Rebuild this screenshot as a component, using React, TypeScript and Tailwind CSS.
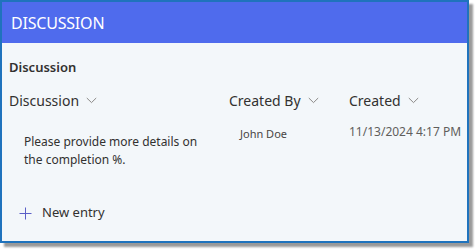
import React from "react";

const Chevron = () => (
  <svg width="11" height="7" viewBox="0 0 11 7" className="ml-[7px] mt-[1px]">
    <path d="M0.8 1 L5.5 5.6 L10.2 1" fill="none" stroke="#8a8886" strokeWidth="1" />
  </svg>
);

export default function App() {
  return (
    <div className="w-[476px] h-[249px] bg-white" style={{ fontFamily: '"Noto Sans", "Open Sans", sans-serif' }}>
      <div className="w-[469px] h-[243px] border-2 border-[#1f73bd] bg-[#f3f7fa] shadow-[4px_4px_2px_rgba(0,0,0,0.4)] flex flex-col">
        <div className="h-[41px] bg-[#4f6bed] flex items-center pl-[9px] text-white text-[16px] tracking-[-0.2px]">
          DISCUSSION
        </div>
        <div className="h-[36px] flex items-end pl-[7px] pb-[2px] text-[13px] font-semibold text-[#323130]">
          Discussion
        </div>
        <div className="h-[42px] flex items-center text-[14px] text-[#323130]">
          <div className="w-[220px] pl-[7px] flex items-center">Discussion<Chevron /></div>
          <div className="w-[120px] pl-[7px] flex items-center">Created By<Chevron /></div>
          <div className="pl-[7px] flex items-center">Created<Chevron /></div>
        </div>
        <div className="h-[71px] flex text-[12px] text-[#323130]">
          <div className="w-[220px] pl-[22px] pr-[14px] pt-[12px] leading-[18px]">
            Please provide more details on the completion %.
          </div>
          <div className="w-[120px] pl-[18px] pt-[5px] text-[11px] text-[#484644]">John Doe</div>
          <div className="pl-[7px] pt-[2px] text-[12px] text-[#605e5c]">11/13/2024 4:17 PM</div>
        </div>
        <div className="h-[42px] flex items-center pl-[17px] text-[13px] text-[#323130]">
          <svg width="13" height="13" viewBox="0 0 13 13">
            <path d="M6.5 0.5 V12.5 M0.5 6.5 H12.5" stroke="#5b5fc7" strokeWidth="1" fill="none" />
          </svg>
          <span className="ml-[10px]">New entry</span>
        </div>
      </div>
    </div>
  );
}
